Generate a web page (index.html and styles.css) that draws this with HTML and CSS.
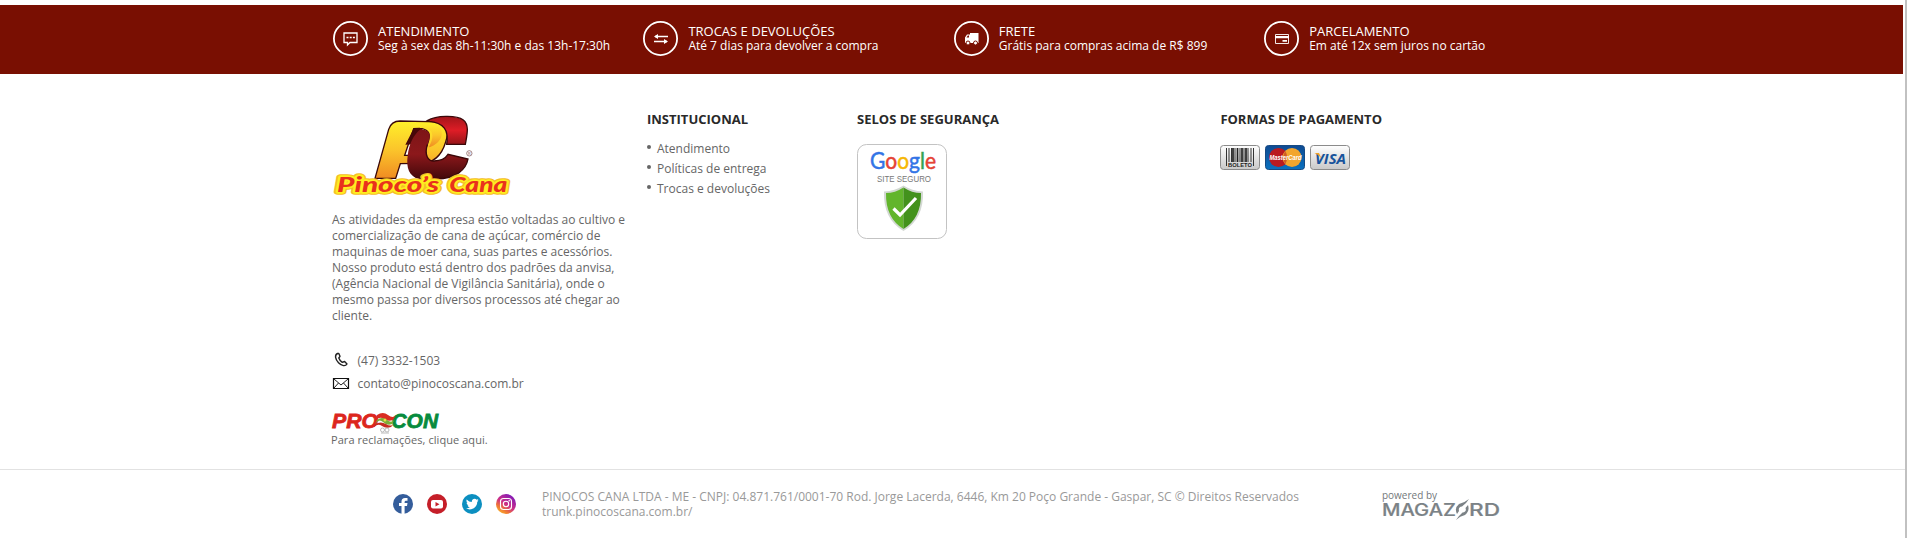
FILE: index.html
```html
<!DOCTYPE html>
<html lang="pt-BR">
<head>
<meta charset="utf-8">
<title>Pinoco's Cana</title>
<link rel="stylesheet" href="styles.css">
</head>
<body>
<div class="page">
  <section class="benefits">
    <div class="benefit">
      <svg class="badge" viewBox="0 0 36 36"><circle cx="17.500" cy="17.500" r="16.600"/><path d="M11 12H24V21.500H17L14.500 24V21.500H11Z" stroke-width="1.300"/><path d="M13.500 16.500h2M16.700 16.500h2M19.900 16.500h2" stroke-width="1.600"/></svg>
      <div><p class="benefit-title">ATENDIMENTO</p><p>Seg à sex das 8h-11:30h e das 13h-17:30h</p></div>
    </div>
    <div class="benefit">
      <svg class="badge" viewBox="0 0 36 36"><circle cx="17.500" cy="17.500" r="16.600"/><path d="M25 15.500H12M11 20.500H24" stroke-width="1.300"/><path class="fill" d="M11 15.500l4-2.500v5zM25 20.500l-4-2.500v5z"/></svg>
      <div><p class="benefit-title">TROCAS E DEVOLUÇÕES</p><p>Até 7 dias para devolver a compra</p></div>
    </div>
    <div class="benefit">
      <svg class="badge" viewBox="0 0 36 36"><circle cx="17.500" cy="17.500" r="16.600"/><path class="fill" d="M16 12h8.500v10H11v-5.500l2-3h3z"/><path class="cut" d="M12.500 16.500l1.300-2H15v2z"/><circle class="wheel" cx="14" cy="22" r="2"/><circle class="wheel" cx="21.500" cy="22" r="2"/></svg>
      <div><p class="benefit-title">FRETE</p><p>Grátis para compras acima de R$ 899</p></div>
    </div>
    <div class="benefit">
      <svg class="badge" viewBox="0 0 36 36"><circle cx="17.500" cy="17.500" r="16.600"/><path d="M11.500 13.500h13v9h-13z" stroke-width=".9"/><path class="fill" d="M11 15h14v2.200H11zM18.500 19h4.500v1.700h-4.500z"/></svg>
      <div><p class="benefit-title">PARCELAMENTO</p><p>Em até 12x sem juros no cartão</p></div>
    </div>
  </section>

  <main class="columns">
    <section class="about">
      <svg class="logo" viewBox="36 45 543 246">
        <defs>
          <linearGradient id="gold" x1="0" y1="0" x2="0" y2="1"><stop offset="0" stop-color="#fff02a"/><stop offset=".5" stop-color="#fbc52b"/><stop offset="1" stop-color="#f08c22"/></linearGradient>
          <linearGradient id="wine" x1="0" y1="0" x2="0" y2="1"><stop offset="0" stop-color="#7d1517"/><stop offset=".5" stop-color="#8c181b"/><stop offset="1" stop-color="#42080a"/></linearGradient>
          <linearGradient id="red" x1="0" y1="0" x2="0" y2="1"><stop offset="0" stop-color="#a3151a"/><stop offset=".5" stop-color="#de1d26"/><stop offset="1" stop-color="#961519"/></linearGradient>
        </defs>
        <path d="M322 62C348 46 410 45 430 60C449 75 441 105 436 133H380Q392 82 322 62Z" fill="url(#red)" stroke="#3a0809" stroke-width="4"/>
        <path fill-rule="evenodd" d="M165 235L206 88Q214 63 240 63L327 65C371 67 389 94 377 126C367 160 344 190 300 190L241 191L227 235ZM281 86L254 166H280C312 166 321 140 326 120C333 97 320 86 298 85Z" fill="url(#gold)" stroke="#3a0809" stroke-width="4"/>
        <path d="M280 88Q304 80 308 87Q289 107 283 133L256 134Z" fill="#470809"/>
        <path d="M302 88C339 92 331 115 322 134C312 166 325 184 342 183C363 182 374 178 384 163L444 177C438 210 408 235 350 237H298C267 230 258 202 263 167C267 133 281 103 302 88Z" fill="url(#wine)"/>
        <path d="M322 134C312 166 325 184 342 183C363 182 374 178 384 163L444 177C438 210 408 235 350 237" fill="none" stroke="#3a0809" stroke-width="4"/>
        <path d="M300 84C344 83 344 110 326 142C354 135 374 109 362 86C350 68 319 69 300 72Z" fill="url(#gold)"/>
        <g class="logo-name">
          <text x="51" y="276" textLength="306" lengthAdjust="spacingAndGlyphs" class="rim">Pinoco’s</text><text x="388" y="276" textLength="174" lengthAdjust="spacingAndGlyphs" class="rim">Cana</text>
          <text x="51" y="276" textLength="306" lengthAdjust="spacingAndGlyphs">Pinoco’s</text><text x="388" y="276" textLength="174" lengthAdjust="spacingAndGlyphs">Cana</text>
        </g>
        <circle cx="448" cy="160" r="8" fill="none" stroke="#76484b" stroke-width="2"/><text x="444" y="164" font-size="11" class="reg">R</text>
      </svg>
      <p class="description">As atividades da empresa estão voltadas ao cultivo e<br>comercialização de cana de açúcar, comércio de<br>maquinas de moer cana, suas partes e acessórios.<br>Nosso produto está dentro dos padrões da anvisa,<br>(Agência Nacional de Vigilância Sanitária), onde o<br>mesmo passa por diversos processos até chegar ao<br>cliente.</p>
      <p class="contact"><svg viewBox="0 0 18 16"><path d="M5.500 1.500C2.300 3 3.300 7.500 6.500 10.800C9.800 14.200 13.500 14.500 15 12L12.600 9.500L10.300 10.400Q7.600 8.500 6.800 6L8 4.300L6.800 1.500Z" fill="none" stroke="#222" stroke-width="1.400" stroke-linejoin="round"/></svg>(47) 3332-1503</p>
      <p class="contact mail"><svg viewBox="0 0 18 16"><path d="M1.500 3.500h15v10h-15z" fill="none" stroke="#111" stroke-width="1.200"/><path d="M2 4l7 6 7-6M2 13l4.500-5M16 13l-4.500-5" fill="none" stroke="#222" stroke-width="1"/></svg>contato@pinocoscana.com.br</p>
      <svg class="procon" viewBox="0 0 108 22">
        <text x="0" y="16" textLength="46" lengthAdjust="spacingAndGlyphs" fill="#dc261d" stroke="#dc261d">PRO</text>
        <text x="59.500" y="16" textLength="46.500" lengthAdjust="spacingAndGlyphs" fill="#078b3d" stroke="#078b3d">CON</text>
        <path d="M45 3Q51-1 56 3T64 3L61 8Q56 10 52 7T44 8Z" fill="#d92d22"/><path d="M45 8Q50 4 55 8T63 7L60 12Q55 14 51 10T43 12Z" fill="#7bac35"/><path d="M43 12Q49 9 54 12T62 12L59 15Q54 17 50 14T42 15Z" fill="#c62b20"/><circle cx="53" cy="8" r="1.500" fill="#e7df48"/>
        <g fill="none" stroke="#aaa" stroke-width=".8"><circle cx="50.500" cy="18" r="2"/><circle cx="55" cy="18" r="2"/><path d="M49 21h8"/></g>
      </svg>
      <p class="complaint">Para reclamações, clique aqui.</p>
    </section>
    <section class="links">
      <h2>INSTITUCIONAL</h2>
      <ul><li>Atendimento</li><li>Políticas de entrega</li><li>Trocas e devoluções</li></ul>
    </section>
    <section class="seals">
      <h2>SELOS DE SEGURANÇA</h2>
      <svg class="seal" viewBox="0 0 90 95">
        <rect x=".5" y=".5" width="89" height="94" rx="9" fill="#fff" stroke="#c3c3c3"/>
        <text x="13" y="24.500" textLength="66" lengthAdjust="spacingAndGlyphs" class="google"><tspan fill="#3274e6" stroke="#3274e6">G</tspan><tspan fill="#e54335" stroke="#e54335">o</tspan><tspan fill="#f6b704" stroke="#f6b704">o</tspan><tspan fill="#3274e6" stroke="#3274e6">g</tspan><tspan fill="#34a353" stroke="#34a353">l</tspan><tspan fill="#e54335" stroke="#e54335">e</tspan></text>
        <text x="20" y="38" textLength="54" lengthAdjust="spacingAndGlyphs" class="safe">SITE SEGURO</text>
        <path d="M46.500 41.500Q55 47 66 47.500Q67 75 46.500 87Q26 75 27 47.500Q38 47 46.500 41.500Z" fill="#d3d8d3"/>
        <path d="M46.500 43.500V85Q28.500 74 29 49Q38 49 46.500 43.500Z" fill="#62b52c"/><path d="M46.500 43.500V85Q64.500 74 64 49Q55 49 46.500 43.500Z" fill="#43921c"/>
        <path d="M36.500 64.500L43 71L59 54" fill="none" stroke="#fff" stroke-width="3.200"/>
      </svg>
    </section>
    <section>
      <h2>FORMAS DE PAGAMENTO</h2>
      <div class="cards">
        <svg viewBox="0 0 40 25"><defs><linearGradient id="silver" x1="0" y1="0" x2="0" y2="1"><stop stop-color="#fff"/><stop offset="1" stop-color="#c8c8c8"/></linearGradient><linearGradient id="blue" x1="0" y1="0" x2="0" y2="1"><stop stop-color="#0f4a92"/><stop offset="1" stop-color="#0a71bf"/></linearGradient></defs><rect x=".5" y=".5" width="39" height="24" rx="3" fill="url(#silver)" stroke="#8b8b8b"/><path d="M6.500 3v18M9 3v14M11.500 3v14M15 3v14M20 3v14M24 3v14M28 3v14M31 3v14M33.500 3v18" stroke="#333" stroke-width="1"/><path d="M13 3v14M17.500 3v14M22 3v14M26 3v14" stroke="#222" stroke-width="1.700"/><text x="8" y="22" textLength="24" lengthAdjust="spacingAndGlyphs" class="boleto">BOLETO</text></svg>
        <svg viewBox="0 0 40 25"><rect x=".5" y=".5" width="39" height="24" rx="3" fill="url(#blue)" stroke="#174a83"/><circle cx="13.500" cy="12.500" r="9.500" fill="#b91b20"/><circle cx="27" cy="12.500" r="9.500" fill="#f2a52d"/><path d="M20.250 5.800Q24 12.500 20.250 19.200Q16.500 12.500 20.250 5.800" fill="#cf5c27"/><text x="4.500" y="15" textLength="32" lengthAdjust="spacingAndGlyphs" class="master">MasterCard</text></svg>
        <svg viewBox="0 0 40 25"><rect x=".5" y=".5" width="39" height="24" rx="3" fill="url(#silver)" stroke="#8b8b8b"/><text x="5" y="18.500" textLength="31" lengthAdjust="spacingAndGlyphs" class="visa">VISA</text><path d="M4.500 8H9L11.500 13.500Q8.500 9.500 4.500 8Z" fill="#f1a326"/></svg>
      </div>
    </section>
  </main>

  <footer class="footer">
    <div class="social">
      <svg viewBox="0 0 20 20"><circle cx="10" cy="10" r="10" fill="#345d9b"/><path d="M8.500 20V12H6V9H8.500V7.500Q8.500 4 12 4H14.500V6.800H13Q11.600 6.800 11.600 8.200V9H14.500L14 12H11.600V20Z" fill="#fff"/></svg>
      <svg viewBox="0 0 20 20"><circle cx="10" cy="10" r="10" fill="#c51f29"/><rect x="4" y="6" width="12" height="8.500" rx="2" fill="#fff"/><path d="M8.500 8l4 2.200-4 2.200z" fill="#c51f29"/></svg>
      <svg viewBox="0 0 20 20"><circle cx="10" cy="10" r="10" fill="#0c8fc0"/><path d="M4.700 5.500Q7 8 9.800 8.100C9.400 5 13 3.800 14.700 5.700L16.300 5.100L15.500 6.800L16.500 6.600L15.200 8C15.500 13.500 9 17.500 4 14.300Q6.500 14.500 7.800 13.200Q6 13 5.500 11.500H6.500Q4.600 10.500 4.500 8.700L5.500 9Q3.900 7.300 4.700 5.500Z" fill="#fff"/></svg>
      <svg viewBox="0 0 20 20"><defs><linearGradient id="insta" x1=".15" y1="1" x2=".85" y2="0"><stop stop-color="#fdbf28"/><stop offset=".25" stop-color="#ef7835"/><stop offset=".5" stop-color="#cc2e88"/><stop offset="1" stop-color="#7517c0"/></linearGradient></defs><circle cx="10" cy="10" r="10" fill="url(#insta)"/><g fill="none" stroke="#fff" stroke-width="1.100"><rect x="4.500" y="4.500" width="11" height="11" rx="3"/><circle cx="10" cy="10" r="2.700"/></g><circle cx="13.200" cy="6.800" r=".8" fill="#fff"/></svg>
    </div>
    <p class="legal">PINOCOS CANA LTDA - ME - CNPJ: 04.871.761/0001-70 Rod. Jorge Lacerda, 6446, Km 20 Poço Grande - Gaspar, SC © Direitos Reservados<br>trunk.pinocoscana.com.br/</p>
    <svg class="powered" viewBox="0 0 120 30">
      <text x="0" y="9" textLength="55" lengthAdjust="spacingAndGlyphs" class="by">powered by</text>
      <text x="0" y="25.500" textLength="74" lengthAdjust="spacingAndGlyphs" class="brand">MAGAZ</text><text x="87" y="25.500" textLength="31" lengthAdjust="spacingAndGlyphs" class="brand">RD</text>
      <path d="M87 9Q82 13 77 14Q72 18 75 24L77 21Q76 17 80 16.500L84 13ZM74 30Q78 26 83 25Q88 21 86 15L83.500 18Q85 22 80.500 22.500L77 26Z" fill="#7b8286"/>
    </svg>
  </footer>
</div>
</body>
</html>
```
FILE: styles.css
```css
* { box-sizing: border-box; }
body { margin: 0; background: #fff; font-family: "Open Sans", sans-serif; font-size: 12px; color: #666; }
p, h2, ul { margin: 0; padding: 0; }
svg { display: block; flex: none; overflow: visible; }
.page { height: 538px; overflow: hidden; padding-top: 5px; border-right: 2px solid #c1c1c1; display: flex; flex-direction: column; }
.benefits { display: grid; grid-template-columns: repeat(4, 310.400px); height: 69px; margin-right: 2px; padding: 16px 0 0 333px; background: #790f02; color: #fff; }
.benefit { display: flex; gap: 9px; white-space: nowrap; line-height: 14px; }
.benefit > div { padding-top: 4px; }
.benefit-title { font-size: 13px; line-height: 12px; padding-bottom: 2px; }
.badge { width: 36px; height: 36px; fill: none; stroke: #fff; stroke-width: 1.800; }
.badge .fill { fill: #fff; stroke: none; }
.badge .cut { fill: #790f02; stroke: none; }
.badge .wheel { fill: #fff; stroke: #790f02; stroke-width: 1; }
.columns { display: grid; grid-template-columns: 315px 210px 363.400px 1fr; height: 396px; padding: 36px 0 0 332px; border-bottom: 1px solid #e2e2e2; }
h2 { font-size: 13px; font-weight: 700; line-height: 18px; color: #292929; white-space: nowrap; }
.about { padding-top: 5px; white-space: nowrap; }
.logo { width: 181px; height: 82px; }
.logo-name text { font: italic 900 60px Lato, sans-serif; fill: #e9321c; stroke: #ffed20; stroke-width: 10px; stroke-linejoin: round; paint-order: stroke; }
.logo-name .rim { stroke: #f5bd28; stroke-width: 17px; }
.reg { font-family: "Liberation Sans", sans-serif; fill: #76484b; }
.description { margin-top: 15px; line-height: 16px; }
.contact { display: flex; align-items: center; gap: 7.500px; height: 16px; margin-top: 28px; }
.contact svg { width: 18px; height: 16px; }
.contact.mail { margin-top: 7px; }
.procon { width: 108px; height: 22px; margin-top: 21px; }
.procon text { font: italic 700 21px "Liberation Sans", sans-serif; stroke-width: .8px; }
.complaint { margin: -1px 0 0 -1px; font-size: 11px; line-height: 14px; letter-spacing: .06px; }
.links ul { margin-top: 11px; list-style: none; }
.links li { display: flex; gap: 6px; height: 20px; line-height: 20px; }
.links li::before { content: ""; width: 4px; height: 4px; margin-top: 6px; border-radius: 50%; background: #666; }
.seal { width: 90px; height: 95px; margin-top: 16px; }
.google { font: 23px Lato, sans-serif; stroke-width: .5px; }
.safe { font: 8.500px "Liberation Sans", sans-serif; fill: #777; }
.cards { display: flex; gap: 5px; margin: 17px 0 0 -.4px; }
.cards svg { width: 40px; height: 25px; }
.boleto { font: 700 5.500px "Liberation Sans", sans-serif; fill: #222; }
.master { font: italic 700 7px "Liberation Sans", sans-serif; fill: #fff; }
.visa { font: italic 700 14px "Open Sans", sans-serif; fill: #17539b; }
.footer { display: flex; padding-left: 393px; color: #999; }
.social { display: flex; gap: 14.300px; width: 149px; padding-top: 24px; }
.social svg { width: 20px; height: 20px; }
.legal { width: 840px; padding-top: 19px; line-height: 15px; white-space: nowrap; }
.powered { width: 120px; height: 30px; margin-top: 20px; }
.by { font: 10px "Open Sans", sans-serif; fill: #73787b; }
.brand { font: 500 17px Inter, sans-serif; fill: #7b8286; stroke: #7b8286; stroke-width: .2px; }
```
